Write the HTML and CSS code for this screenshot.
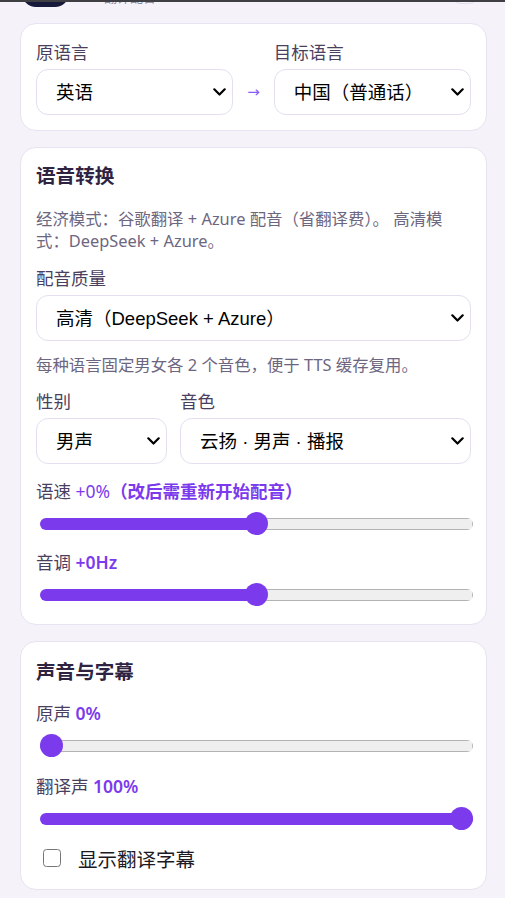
FILE: index.html
```html
<!DOCTYPE html>
<html lang="zh-CN">
<head>
<meta charset="utf-8">
<title>配音设置</title>
<link rel="stylesheet" href="styles.css">
</head>
<body>
<div class="topline"></div>
<div class="page">
  <header class="header">
    <div class="logo"></div>
    <div class="brand">AI 翻译配音</div>
    <div class="header-btn"></div>
  </header>

  <section class="card">
    <div class="lang-grid">
      <div class="field">
        <label class="label">原语言</label>
        <select class="select"><option>英语</option></select>
      </div>
      <span class="arrow">→</span>
      <div class="field">
        <label class="label">目标语言</label>
        <select class="select"><option>中国（普通话）</option></select>
      </div>
    </div>
  </section>

  <section class="card card-voice">
    <h2 class="card-title">语音转换</h2>
    <p class="desc">经济模式：谷歌翻译 + Azure 配音（省翻译费）。 高清模式：DeepSeek + Azure。</p>
    <label class="label label-gap">配音质量</label>
    <select class="select"><option>高清（DeepSeek + Azure）</option></select>
    <p class="desc hint">每种语言固定男女各 2 个音色，便于 TTS 缓存复用。</p>
    <div class="voice-grid">
      <div class="field">
        <label class="label">性别</label>
        <select class="select"><option>男声</option></select>
      </div>
      <div class="field">
        <label class="label">音色</label>
        <select class="select"><option>云扬 · 男声 · 播报</option></select>
      </div>
    </div>
    <div class="slider-field first">
      <div class="label">语速 <span class="val thin">+0%</span><span class="val bold">（改后需重新开始配音）</span></div>
      <input class="range" type="range" min="-50" max="50" value="0" style="--fill:50%">
    </div>
    <div class="slider-field">
      <div class="label">音调 <span class="val">+0Hz</span></div>
      <input class="range" type="range" min="-50" max="50" value="0" style="--fill:50%">
    </div>
  </section>

  <section class="card card-mix">
    <h2 class="card-title">声音与字幕</h2>
    <div class="slider-field first-mix">
      <div class="label">原声 <span class="val">0%</span></div>
      <input class="range" type="range" min="0" max="100" value="0" style="--fill:0%">
    </div>
    <div class="slider-field">
      <div class="label">翻译声 <span class="val">100%</span></div>
      <input class="range" type="range" min="0" max="100" value="100" style="--fill:100%">
    </div>
    <label class="check-row">
      <input class="check" type="checkbox">
      <span class="check-text">显示翻译字幕</span>
    </label>
  </section>
</div>
</body>
</html>
```
FILE: styles.css
```css
* { box-sizing: border-box; }

html, body {
  margin: 0;
  background: #f5f2fa;
}

body {
  font-family: "Noto Sans", "Noto Sans CJK SC", sans-serif;
  color: #4a3e5e;
  overflow: hidden;
}

.topline {
  position: fixed;
  top: 0;
  left: 0;
  right: 0;
  height: 2px;
  background: #3f3f44;
  z-index: 5;
}

.page {
  padding: 0 18px 20px 20px;
}

.header {
  display: flex;
  align-items: flex-end;
  height: 44px;
  margin-top: -37px;
  margin-bottom: 16px;
}

.logo {
  width: 47px;
  height: 44px;
  margin-left: 2px;
  border-radius: 14px;
  background: #17193a;
}

.brand {
  margin-left: 19px;
  margin-bottom: 2px;
  font-size: 13px;
  line-height: 16px;
  color: #8d869a;
}

.header-btn {
  margin-left: auto;
  margin-right: 8px;
  margin-bottom: 3px;
  width: 28px;
  height: 28px;
  border: 1px solid #e3ddef;
  border-radius: 10px;
  background: #f7f4fb;
}

.card {
  background: #fff;
  border: 1px solid #e8e2f1;
  border-radius: 16px;
  padding: 16px 15px 15px;
  margin-bottom: 16px;
}

.card-voice {
  padding-bottom: 16px;
}

.card-mix {
  padding-top: 18px;
  padding-bottom: 17px;
}

.lang-grid {
  display: grid;
  grid-template-columns: 1fr auto 1fr;
  align-items: end;
  column-gap: 14px;
}

.field {
  display: flex;
  flex-direction: column;
  min-width: 0;
}

.label {
  display: block;
  font-size: 17.5px;
  line-height: 24px;
  margin-bottom: 5px;
  color: #4b3f60;
}

.arrow {
  font-family: "DejaVu Sans", sans-serif;
  font-size: 15px;
  line-height: 46px;
  color: #8b5cf6;
}

.select {
  -webkit-appearance: none;
  appearance: none;
  display: block;
  width: 100%;
  height: 46px;
  margin: 0;
  padding: 0 30px 0 19px;
  border: 1px solid #e4deef;
  border-radius: 12px;
  background: #fff url("data:image/svg+xml,%3Csvg xmlns='http://www.w3.org/2000/svg' width='13' height='8' viewBox='0 0 13 8'%3E%3Cpath d='M1.3 1.3L6.5 6.5L11.7 1.3' fill='none' stroke='%23000' stroke-width='2.2' stroke-linecap='round' stroke-linejoin='round'/%3E%3C/svg%3E") no-repeat right 6px center / 13px 8px;
  font-family: "Liberation Sans", "Noto Sans CJK SC", sans-serif;
  font-size: 18.5px;
  color: #000;
  outline: none;
}

.card-title {
  margin: 0;
  font-size: 19.6px;
  line-height: 24px;
  font-weight: 700;
  color: #2f2342;
}

.desc {
  margin: 20px 0 0;
  font-size: 16.4px;
  line-height: 22px;
  color: #6d6680;
}

.label-gap {
  margin-top: 14px;
}

.hint {
  margin-top: 13px;
}

.voice-grid {
  display: grid;
  grid-template-columns: 131px 1fr;
  column-gap: 13px;
  margin-top: 13px;
}

.slider-field {
  margin-top: 15px;
}

.card-mix .slider-field {
  margin-top: 17px;
}

.slider-field.first {
  margin-top: 15px;
}

.card-mix .slider-field.first-mix {
  margin-top: 17px;
}

.slider-field .label {
  margin-bottom: 9px;
}

.val {
  color: #7c3aed;
  font-weight: 600;
}

.val.thin {
  font-weight: 400;
}

.val.bold {
  font-weight: 700;
}

.range {
  -webkit-appearance: none;
  appearance: none;
  display: block;
  width: calc(100% - 2px);
  height: 23px;
  margin: 0 0 2px 4px;
  padding: 0;
  background: transparent;
  outline: none;
}

.range::-webkit-slider-runnable-track {
  height: 12px;
  border-radius: 6px;
  border: none;
  background:
    linear-gradient(#7c3aed, #7c3aed) left top / var(--fill) 100% no-repeat,
    linear-gradient(#efefef, #efefef) 1px 1px / calc(100% - 2px) calc(100% - 2px) no-repeat,
    #b3b3b3;
}

.range::-webkit-slider-thumb {
  -webkit-appearance: none;
  appearance: none;
  width: 23px;
  height: 23px;
  margin-top: -5.5px;
  border: none;
  border-radius: 50%;
  background: #7c3aed;
}

.check-row {
  display: flex;
  align-items: center;
  height: 28px;
  margin-top: 14px;
  cursor: pointer;
}

.check {
  -webkit-appearance: none;
  appearance: none;
  width: 18px;
  height: 18px;
  margin: 0 0 0 7px;
  border: 1.5px solid #767676;
  border-radius: 3.5px;
  background: #fff;
}

.check-text {
  margin-left: 17px;
  font-size: 19.5px;
  color: #1c1a24;
}
```
